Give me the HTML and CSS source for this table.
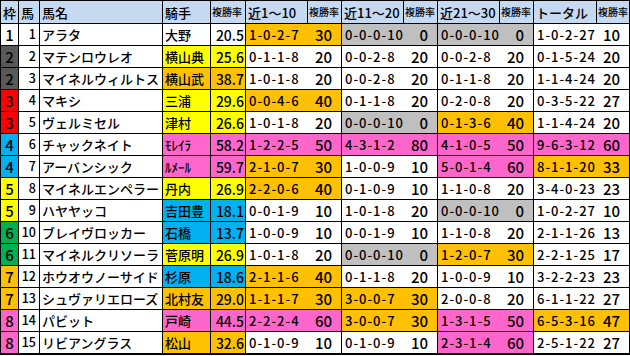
FILE: index.html
```html
<!DOCTYPE html>
<html lang="ja">
<head>
<meta charset="utf-8">
<link rel="stylesheet" href="styles.css">
</head>
<body>
<div class="sheet">
  <div class="h">枠</div><div class="h">馬</div><div class="h">馬名</div><div class="h">騎手</div><div class="h sm">複勝率</div>
  <div class="h">近1～10</div><div class="h sm">複勝率</div><div class="h">近11～20</div><div class="h sm">複勝率</div>
  <div class="h">近21～30</div><div class="h sm">複勝率</div><div class="h">トータル</div><div class="h sm">複勝率</div>

  <div class="c w1">1</div><div class="c num">1</div><div class="c">アラタ</div><div class="c">大野</div><div class="c jr">20.5</div>
  <div class="p or"><span>1-0-2-7</span><b>30</b></div><div class="p gy"><span>0-0-0-10</span><b>0</b></div><div class="p gy"><span>0-0-0-10</span><b>0</b></div><div class="p"><span>1-0-2-27</span><b>10</b></div>

  <div class="c w2">2</div><div class="c num">2</div><div class="c">マテンロウレオ</div><div class="c ye">横山典</div><div class="c jr ye">25.6</div>
  <div class="p"><span>0-1-1-8</span><b>20</b></div><div class="p"><span>0-0-2-8</span><b>20</b></div><div class="p"><span>0-0-2-8</span><b>20</b></div><div class="p"><span>0-1-5-24</span><b>20</b></div>

  <div class="c w2">2</div><div class="c num">3</div><div class="c">マイネルウィルトス</div><div class="c or">横山武</div><div class="c jr or">38.7</div>
  <div class="p"><span>1-0-1-8</span><b>20</b></div><div class="p"><span>0-0-2-8</span><b>20</b></div><div class="p"><span>0-1-1-8</span><b>20</b></div><div class="p"><span>1-1-4-24</span><b>20</b></div>

  <div class="c w3">3</div><div class="c num">4</div><div class="c">マキシ</div><div class="c ye">三浦</div><div class="c jr ye">29.6</div>
  <div class="p or"><span>0-0-4-6</span><b>40</b></div><div class="p"><span>0-1-1-8</span><b>20</b></div><div class="p"><span>0-2-0-8</span><b>20</b></div><div class="p"><span>0-3-5-22</span><b>27</b></div>

  <div class="c w3">3</div><div class="c num">5</div><div class="c">ヴェルミセル</div><div class="c ye">津村</div><div class="c jr ye">26.6</div>
  <div class="p"><span>1-0-1-8</span><b>20</b></div><div class="p gy"><span>0-0-0-10</span><b>0</b></div><div class="p or"><span>0-1-3-6</span><b>40</b></div><div class="p"><span>1-1-4-24</span><b>20</b></div>

  <div class="c w4">4</div><div class="c num">6</div><div class="c">チャックネイト</div><div class="c pk">ﾓﾚｲﾗ</div><div class="c jr pk">58.2</div>
  <div class="p pk"><span>1-2-2-5</span><b>50</b></div><div class="p pk"><span>4-3-1-2</span><b>80</b></div><div class="p pk"><span>4-1-0-5</span><b>50</b></div><div class="p pk"><span>9-6-3-12</span><b>60</b></div>

  <div class="c w4">4</div><div class="c num">7</div><div class="c">アーバンシック</div><div class="c pk">ﾙﾒｰﾙ</div><div class="c jr pk">59.7</div>
  <div class="p or"><span>2-1-0-7</span><b>30</b></div><div class="p"><span>1-0-0-9</span><b>10</b></div><div class="p pk"><span>5-0-1-4</span><b>60</b></div><div class="p or"><span>8-1-1-20</span><b>33</b></div>

  <div class="c w5">5</div><div class="c num">8</div><div class="c">マイネルエンペラー</div><div class="c ye">丹内</div><div class="c jr ye">26.9</div>
  <div class="p or"><span>2-2-0-6</span><b>40</b></div><div class="p"><span>0-1-0-9</span><b>10</b></div><div class="p"><span>1-1-0-8</span><b>20</b></div><div class="p"><span>3-4-0-23</span><b>23</b></div>

  <div class="c w5">5</div><div class="c num">9</div><div class="c">ハヤヤッコ</div><div class="c bl">吉田豊</div><div class="c jr bl">18.1</div>
  <div class="p"><span>0-0-1-9</span><b>10</b></div><div class="p"><span>1-0-1-8</span><b>20</b></div><div class="p gy"><span>0-0-0-10</span><b>0</b></div><div class="p"><span>1-0-2-27</span><b>10</b></div>

  <div class="c w6">6</div><div class="c num">10</div><div class="c">ブレイヴロッカー</div><div class="c bl">石橋</div><div class="c jr bl">13.7</div>
  <div class="p"><span>1-0-0-9</span><b>10</b></div><div class="p"><span>0-0-1-9</span><b>10</b></div><div class="p"><span>1-1-0-8</span><b>20</b></div><div class="p"><span>2-1-1-26</span><b>13</b></div>

  <div class="c w6">6</div><div class="c num">11</div><div class="c">マイネルクリソーラ</div><div class="c ye">菅原明</div><div class="c jr ye">26.9</div>
  <div class="p"><span>1-0-1-8</span><b>20</b></div><div class="p gy"><span>0-0-0-10</span><b>0</b></div><div class="p or"><span>1-2-0-7</span><b>30</b></div><div class="p"><span>2-2-1-25</span><b>17</b></div>

  <div class="c w7">7</div><div class="c num">12</div><div class="c">ホウオウノーサイド</div><div class="c bl">杉原</div><div class="c jr bl">18.6</div>
  <div class="p or"><span>2-1-1-6</span><b>40</b></div><div class="p"><span>0-1-1-8</span><b>20</b></div><div class="p"><span>1-0-0-9</span><b>10</b></div><div class="p"><span>3-2-2-23</span><b>23</b></div>

  <div class="c w7">7</div><div class="c num">13</div><div class="c">シュヴァリエローズ</div><div class="c or">北村友</div><div class="c jr or">29.0</div>
  <div class="p or"><span>1-1-1-7</span><b>30</b></div><div class="p or"><span>3-0-0-7</span><b>30</b></div><div class="p"><span>2-0-0-8</span><b>20</b></div><div class="p"><span>6-1-1-22</span><b>27</b></div>

  <div class="c w8">8</div><div class="c num">14</div><div class="c">パビット</div><div class="c pk">戸崎</div><div class="c jr pk">44.5</div>
  <div class="p pk"><span>2-2-2-4</span><b>60</b></div><div class="p or"><span>3-0-0-7</span><b>30</b></div><div class="p pk"><span>1-3-1-5</span><b>50</b></div><div class="p or"><span>6-5-3-16</span><b>47</b></div>

  <div class="c w8">8</div><div class="c num">15</div><div class="c">リビアングラス</div><div class="c or">松山</div><div class="c jr or">32.6</div>
  <div class="p"><span>0-1-0-9</span><b>10</b></div><div class="p"><span>0-1-0-9</span><b>10</b></div><div class="p pk"><span>2-3-1-4</span><b>60</b></div><div class="p"><span>2-5-1-22</span><b>27</b></div>
</div>
</body>
</html>
```

FILE: styles.css
```css
html, body {
  margin: 0;
  padding: 0;
  background: #fff;
}

.sheet {
  width: 628px;
  display: grid;
  grid-template-columns: 17px 20px 122px 47px 34px 61px 33px 61px 33px 61px 33px 62px 32px;
  grid-template-rows: 22px repeat(15, 21px);
  gap: 1px;
  padding: 1px 1px 2px 1px;
  background: #000;
  font-family: "Noto Sans CJK JP", "Noto Sans", sans-serif;
  font-size: 13px;
  font-weight: 500;
  color: #000;
}

.h, .c, .p {
  display: flex;
  align-items: center;
  background: #fff;
  white-space: nowrap;
  overflow: hidden;
  line-height: 1;
}

.h {
  background: #c5d9f1;
  padding-left: 2px;
}

.h.sm {
  font-size: 10px;
  padding-left: 1px;
}

.c {
  padding-left: 2px;
}

.c.num {
  justify-content: flex-end;
  padding-left: 0;
  padding-right: 3px;
  font-size: 12.5px;
}

.c.jr {
  justify-content: flex-end;
  padding-left: 0;
  padding-right: 1px;
  font-size: 14px;
}

.p {
  grid-column: span 2;
  justify-content: space-between;
  padding-left: 3px;
  padding-right: 9px;
}

.p span {
  letter-spacing: 1px;
}

.p b {
  font-weight: 500;
  font-size: 15px;
}

.w1, .w2, .w3, .w4, .w5, .w6, .w7, .w8 {
  justify-content: center;
  padding-left: 0;
  font-size: 15px;
}

.w2 { background: #595959; }
.w3 { background: #ff0000; }
.w4 { background: #00b0f0; }
.w5 { background: #ffff00; }
.w6 { background: #00b050; }
.w7 { background: #ffc000; }
.w8 { background: #ff66cc; }

.or { background: #ffc000; }
.ye { background: #ffff00; }
.pk { background: #ff66cc; }
.gy { background: #c0c0c0; }
.bl { background: #00b0f0; }
```
